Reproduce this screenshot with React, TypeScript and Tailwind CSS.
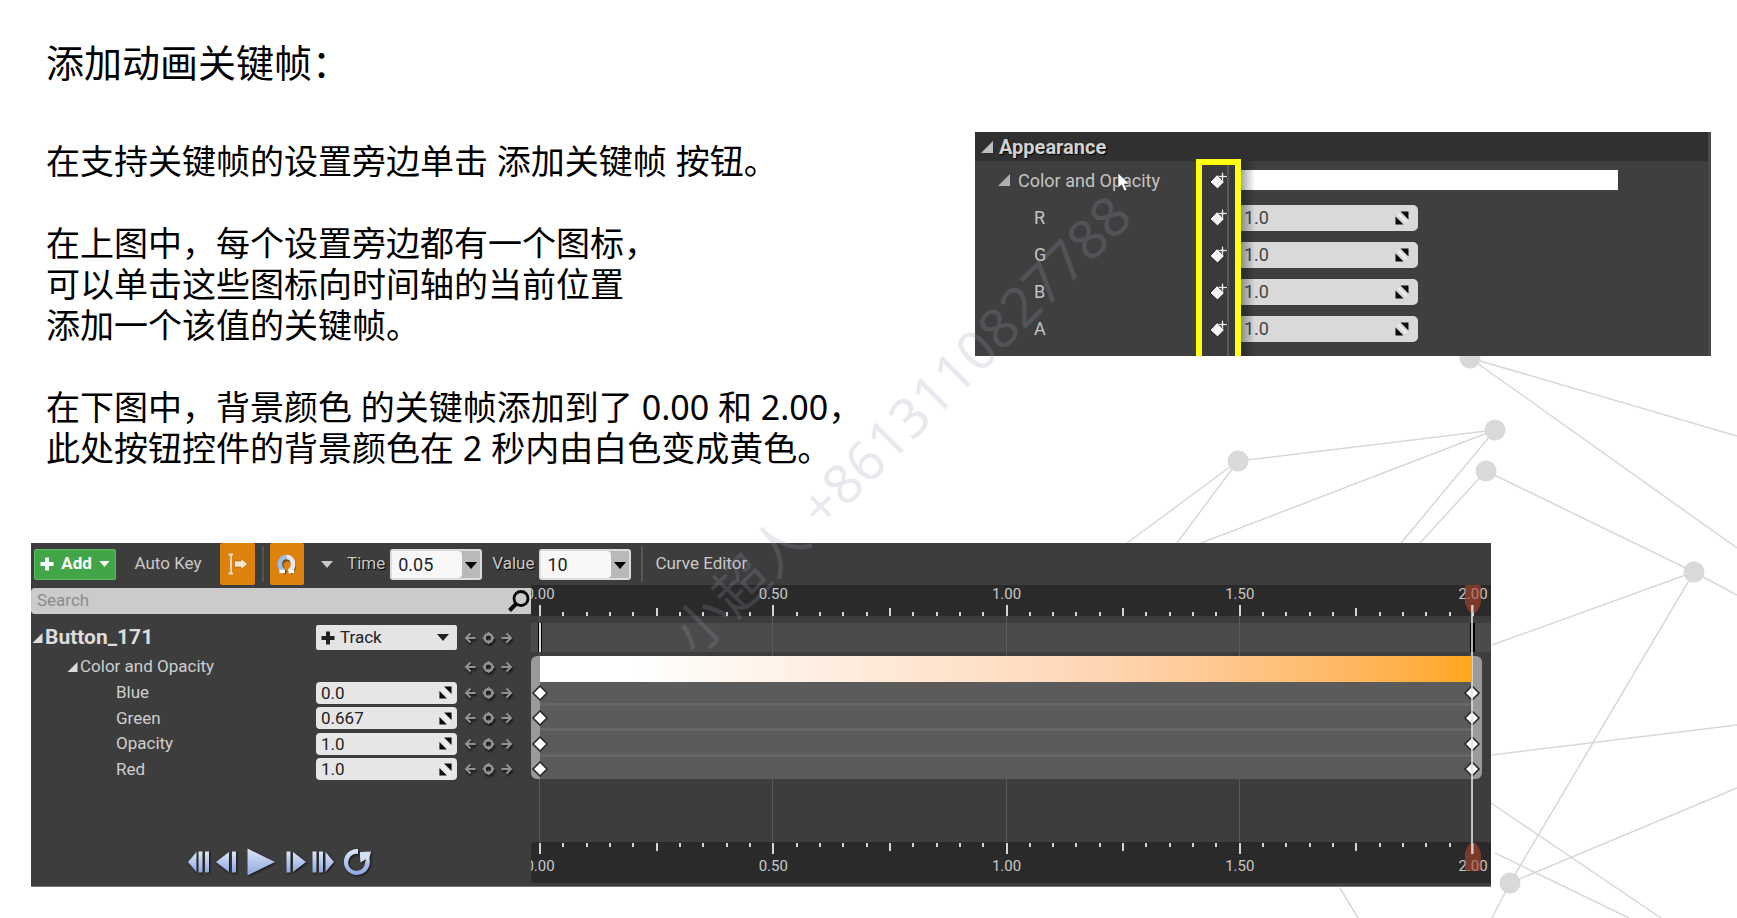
import React from 'react';

const NODES: [number, number][] = [
  [1470, 358], [1495, 430], [1238, 461], [1486, 471], [1694, 572], [1510, 883],
];

const EDGES: [number, number, number, number][] = [
  [1470, 358, 1737, 436], [1470, 358, 1737, 548], [1238, 461, 1495, 430],
  [1495, 430, 1201, 543], [1495, 430, 1401, 543], [1486, 471, 1420, 543],
  [1238, 461, 1127, 543], [1238, 461, 1177, 543], [1486, 471, 1694, 572],
  [1694, 572, 1737, 595], [1694, 572, 1492, 645], [1694, 572, 1510, 883],
  [1492, 755, 1737, 725], [1510, 883, 1737, 788], [1510, 883, 1492, 918],
  [1491, 803, 1661, 918], [1495, 853, 1629, 918], [1340, 888, 1358, 918],
];

function Network() {
  return (
    <svg className="absolute right-0 top-0 -z-10" width="1737" height="918" viewBox="0 0 1737 918" aria-hidden="true">
      <g stroke="#d8d8d8" strokeWidth="1.5">
        {EDGES.map(([a, b, c, d], i) => <line key={i} x1={a} y1={b} x2={c} y2={d} />)}
      </g>
      <g fill="#d9d9d9">
        {NODES.map(([x, y], i) => <circle key={i} cx={x} cy={y} r="10.5" />)}
      </g>
    </svg>
  );
}

function Expander({ className = '' }: { className?: string }) {
  return (
    <svg className={className} width="12" height="12" viewBox="0 0 12 12" aria-hidden="true">
      <path d="M12 0v12H0z" fill="currentColor" />
    </svg>
  );
}

function SpinIcon({ className = '' }: { className?: string }) {
  return (
    <svg className={className} width="14" height="14" viewBox="0 0 14 14" fill="#0a0a0a" aria-hidden="true">
      <path d="M5.500 0.500H13.500V8.500z" />
      <path d="M0.500 5.500V13.500H8.500z" />
      <path d="M3 2.500L11.500 11" stroke="#f6f6f6" strokeWidth="1.500" />
    </svg>
  );
}

function Caret({ className = '' }: { className?: string }) {
  return (
    <svg className={className} width="12" height="7" viewBox="0 0 12 7" fill="currentColor" aria-hidden="true">
      <path d="M0 0h12L6 7z" />
    </svg>
  );
}

function Plus() {
  return (
    <svg width="14" height="14" viewBox="0 0 14 14" fill="currentColor" aria-hidden="true">
      <path d="M5 0.500h4V5h4.500v4H9v4.500H5V9H0.500V5H5z" />
    </svg>
  );
}

function AddKeyIcon() {
  return (
    <svg width="18" height="18" viewBox="0 0 18 18" aria-hidden="true">
      <path d="M7 2.500L14.500 10L7.500 17L0 10z" fill="#f4f4f4" stroke="#1b1b1b" />
      <path d="M12.500 0v8M9 4.500h8.500" stroke="#1b1b1b" strokeWidth="3" />
      <path d="M12.500 0.500v8M8.500 4.500h8.500" stroke="#e8e8e8" strokeWidth="1.600" />
    </svg>
  );
}

function KeyNav() {
  return (
    <div className="flex items-center gap-[5px] text-[#929292] drop-shadow-[1px_2px_1px_#111]">
      <button aria-label="Previous key">
        <svg width="13" height="12" viewBox="0 0 13 12" fill="none" stroke="currentColor" strokeWidth="2"><path d="M11.500 6H2.500M6.500 1.500L2 6L6.500 10.500" /></svg>
      </button>
      <button aria-label="Add key">
        <svg width="13" height="12" viewBox="0 0 13 12" fill="none" stroke="currentColor"><circle cx="6.500" cy="6" r="3.900" strokeWidth="2.600" /><path d="M6.500 0v3.500M6.500 8.500v3.500M0.500 6h3.500M9 6h3.500" strokeWidth="1.500" /></svg>
      </button>
      <button aria-label="Next key">
        <svg width="13" height="12" viewBox="0 0 13 12" fill="none" stroke="currentColor" strokeWidth="2"><path d="M1.500 6h9M6.500 1.500L11 6L6.500 10.500" /></svg>
      </button>
    </div>
  );
}

function Appearance() {
  return (
    <section className="relative mr-[26px] mt-[132px] h-[224px] w-[736px] shrink-0 overflow-hidden border-r-[3px] border-[#4a4a4a] bg-[#3f3f3f] text-[#c4c4c4]">
      <h2 className="flex h-[29px] items-center gap-[6px] bg-[#303030] pl-[6px] text-[20px] font-bold text-[#d2d2d2] [text-shadow:1px_1px_1px_#000]">
        <Expander className="text-[#bdbdbd]" />
        Appearance
      </h2>
      <div className="flex h-[38px] items-center">
        <div className="flex w-[266px] items-center gap-2 pl-[23px] text-[18px]">
          <Expander className="text-[#b0b0b0]" />
          Color and Opacity
        </div>
        <div className="mr-[90px] h-5 grow bg-white" />
      </div>
      {['R', 'G', 'B', 'A'].map((c) => (
        <div key={c} className="flex h-[37px] items-center text-[18px]">
          <label htmlFor={`ch-${c}`} className="w-[266px] pl-[59px]">{c}</label>
          <div className="flex h-[26px] w-[177px] items-center rounded-r-[5px] bg-[#d9d9d9] pr-[9px]">
            <input id={`ch-${c}`} defaultValue="1.0" className="w-0 grow bg-transparent pl-[3px] text-[18px] text-[#444] outline-none" />
            <SpinIcon />
          </div>
        </div>
      ))}
      <div className="absolute bottom-0 left-[221px] top-[27px] flex w-[45px] flex-col border-6 border-b-0 border-[#ffff12] bg-[#3a3a3a] pt-[7px]">
        <div className="absolute inset-y-0 right-[6px] w-[2px] bg-[#55585e]" />
        {['color', 'R', 'G', 'B', 'A'].map((c) => (
          <button key={c} aria-label={`Add keyframe ${c}`} className="relative flex h-[37px] shrink-0 items-start pl-[8px]"><AddKeyIcon /></button>
        ))}
      </div>
      <div className="absolute bottom-0 left-[266px] top-[29px] w-[14px] bg-linear-to-r from-black/35 to-transparent" />
      <svg className="absolute left-[142px] top-[40px]" width="14" height="20" viewBox="0 0 14 20" aria-hidden="true">
        <path d="M1 1V16L4.500 12.800L7.500 19L10 17.800L7.200 12H12.500z" fill="#fff" stroke="#333" strokeWidth="0.600" />
      </svg>
    </section>
  );
}

function Combo({ label, value }: { label: string; value: string }) {
  return (
    <label className="flex items-center gap-[5px]">
      {label}
      <span className="flex h-[31px] w-[92px] rounded-[3px] border-2 border-[#dcdcdc] bg-[#b9b9b9] relative">
        <select defaultValue={value} className="mr-[18px] w-0 grow appearance-none rounded-r-[4px] bg-[#f7f7f7] pl-[6px] text-[18px] text-[#222] outline-none">
          <option>{value}</option>
        </select>
        <Caret className="pointer-events-none absolute right-[3px] top-[11px] text-black" />
      </span>
    </label>
  );
}

function Toolbar() {
  return (
    <div className="flex h-[42px] items-center pl-[3px] text-[17px] text-[#c9c9c9] [text-shadow:1px_1px_1px_#000]">
      <button className="flex h-[31px] w-[82px] items-center justify-center gap-[7px] rounded-[2px] border border-[#5cc063] bg-[#42a649] font-bold text-white">
        <Plus />Add<Caret className="h-[6px] w-[11px]" />
      </button>
      <button className="w-[104px] text-center">Auto Key</button>
      <button aria-label="Key all" className="flex h-[42px] w-[35px] items-center justify-center rounded-[2px] bg-[#dd820c]">
        <svg width="20" height="22" viewBox="0 0 20 22" aria-hidden="true">
          <path d="M0.500 1.500h4.500M0.500 20.500h4.500M3 1.500v19" stroke="#f0dcc0" strokeWidth="1.800" fill="none" />
          <path d="M6.500 8h6.500V5.500l6.500 5.500L13 16.500v-2.500H6.500z" fill="#f7e6cb" stroke="#8a5208" strokeWidth="0.500" />
        </svg>
      </button>
      <div className="ml-[7px] mr-[6px] h-[36px] w-[2px] bg-[#57534b]" />
      <button aria-label="Snap" className="flex h-[42px] w-[34px] items-center justify-center rounded-[2px] bg-[#dd820c]">
        <svg width="20" height="21" viewBox="0 0 20 21" fill="none" aria-hidden="true">
          <path d="M8 17.500C1.500 14 1.500 3.500 9.500 3.500S17 14 12 17.500" stroke="#6c4a1c" strokeWidth="4.500" transform="translate(1 1.500)" />
          <path d="M7 17.500C1 14 1.500 3 9.500 3" stroke="#9dbcf0" strokeWidth="4.600" />
          <path d="M9.500 3C17.500 3 18 14 12 17.500" stroke="#e3e8f2" strokeWidth="4.600" />
          <path d="M2.500 17.500h5.500M11.500 17.500h5.500" stroke="#fff" strokeWidth="3.500" />
        </svg>
      </button>
      <button aria-label="Snap options" className="ml-[17px] mr-[14px]"><Caret /></button>
      <Combo label="Time" value="0.05" />
      <div className="w-[10px]" />
      <Combo label="Value" value="10" />
      <div className="ml-[10px] h-[36px] w-[2px] bg-[#57575a]" />
      <button className="ml-[12px]">Curve Editor</button>
    </div>
  );
}

function ChannelRow({ name, value }: { name: string; value: string }) {
  return (
    <div className="flex flex-1 items-center pl-[85px]">
      <label htmlFor={`v-${name}`} className="w-[200px]">{name}</label>
      <div className="mr-[7px] flex h-[22px] w-[141px] items-center rounded-[4px] bg-[#e6e6e6] pr-[5px]">
        <input id={`v-${name}`} defaultValue={value} className="w-0 grow bg-transparent pl-[5px] text-[17px] leading-[22px] text-[#222] outline-none" />
        <SpinIcon className="h-[13px] w-[13px]" />
      </div>
      <KeyNav />
    </div>
  );
}

const PLAY_PATHS: { label: string; w: number; h: number; d: string }[] = [
  { label: 'To start', w: 22, h: 22, d: 'M8.500 1v20L0 11zM10.500 0.500h4v21h-4zM17 0.500h4v21h-4z' },
  { label: 'Step back', w: 21, h: 22, d: 'M13 1v20L0 11zM16 0.500h4v21h-4z' },
  { label: 'Play', w: 29, h: 28, d: 'M0.500 0.500L28 14L0.500 27.500z' },
  { label: 'Step forward', w: 20, h: 22, d: 'M0.500 0.500h4v21h-4zM7 1L20 11L7 21z' },
  { label: 'To end', w: 22, h: 22, d: 'M0.500 0.500h4v21h-4zM7 0.500h4v21h-4zM13.500 1L22 11L13.500 21z' },
];

function Playback() {
  return (
    <div className="flex h-[30px] items-center pl-[157px]">
      <svg width="0" height="0" aria-hidden="true">
        <linearGradient id="steel" x1="0" y1="0" x2="0" y2="1">
          <stop offset="0" stopColor="#dfe7f6" /><stop offset="1" stopColor="#8ba6e0" />
        </linearGradient>
      </svg>
      <div className="flex items-center gap-[6px] drop-shadow-[1px_1px_1px_#111]">
        {PLAY_PATHS.map((p) => (
          <button key={p.label} aria-label={p.label} className={p.label === 'Play' ? 'mx-[4px]' : ''}>
            <svg width={p.w} height={p.h} viewBox={`0 0 ${p.w} ${p.h}`}><path d={p.d} fill="url(#steel)" /></svg>
          </button>
        ))}
        <button aria-label="Loop" className="ml-[2px]">
          <svg width="30" height="30" viewBox="0 0 30 30">
            <path d="M16 2A13 13 0 1 0 27.500 12L23 14A8.500 8.500 0 1 1 16 7z" fill="url(#steel)" />
            <path d="M18 5L29 4.500L26.500 15L23.500 12.500L18.500 15.500L18 9.500z" fill="#d3def5" />
          </svg>
        </button>
      </div>
    </div>
  );
}

const TICKS = Array.from({ length: 41 }, (_, i) => i);
const LABELS = ['0.00', '0.50', '1.00', '1.50', '2.00'];

function Ruler({ top }: { top: boolean }) {
  return (
    <div className={top ? 'relative h-[31px] overflow-hidden bg-[#2a2a2a]' : 'relative h-[41px] overflow-hidden rounded-l-[3px] bg-[#2a2a2a]'}>
      <div className="absolute inset-y-0 left-[8px] right-[19px]">
        {TICKS.map((i) => (
          <span
            key={i}
            className={`absolute w-[2px] bg-[#d4d4d4] ${top ? 'bottom-0' : 'top-[1px]'} ${i % 10 === 0 ? 'h-[11px]' : i % 5 === 0 ? 'h-[8px]' : 'h-[4px]'}`}
            style={{ left: `${i * 2.5}%` }}
          />
        ))}
        {LABELS.map((l, i) => (
          <span
            key={l}
            className={`absolute -translate-x-1/2 pl-[2px] text-[15px] leading-[18px] text-[#c9c9c9] ${top ? 'top-0' : 'top-[15px]'}`}
            style={{ left: `${i * 25}%` }}
          >
            {l}
          </span>
        ))}
        <svg className={top ? 'absolute -right-[10px] top-0' : 'absolute -right-[10px] top-0 rotate-180'} width="18" height="29" viewBox="0 0 18 29" aria-hidden="true">
          <path d="M1 2Q1 0 3 0H15Q17 0 17 2V18Q15 25 11 28H7Q3 25 1 18z" fill="#b0482f" fillOpacity="0.6" />
        </svg>
      </div>
    </div>
  );
}

const CHANNELS = [['Blue', '0.0'], ['Green', '0.667'], ['Opacity', '1.0'], ['Red', '1.0']];

function Diamond() {
  return (
    <svg className="relative" width="16" height="16" viewBox="0 0 16 16" aria-hidden="true">
      <path d="M8 1L15 8L8 15L1 8z" fill="#fff" stroke="#2c2c2c" strokeWidth="1.600" />
    </svg>
  );
}

function Timeline() {
  return (
    <div className="relative flex grow flex-col pb-[3px]">
      <Ruler top />
      <div className="relative flex grow flex-col pt-[7px]">
        <div className="h-[29px] bg-[#4b4b4b]" />
        <div className="absolute inset-y-0 left-[8px] right-[19px]">
          {[0, 1, 2, 3, 4].map((i) => (
            <span key={i} className="absolute inset-y-0 w-px bg-[#5a5a5a]" style={{ left: `${i * 25}%` }} />
          ))}
          <span className="absolute -left-[1px] top-[7px] h-[29px] w-[4px] border-x-[1px] border-black bg-[#ddd]" />
          <span className="absolute -right-[3px] top-[7px] h-[29px] w-[5px] bg-black" />
        </div>
        <div className="relative mr-[9px] mt-[4px] flex h-[123px] flex-col overflow-hidden rounded-[6px] bg-[#9a9a9a]">
          <div className="absolute inset-y-0 left-[9px] right-[10px] bg-[#5b5b5b]" />
          <div className="relative z-10 -mb-[2px] ml-[9px] mr-[10px] h-[26px] shrink-0 bg-linear-to-r from-white from-10% via-[#ffd6b5] via-60% to-[#ffa716]" />
          <div className="relative flex h-[102px] shrink-0 flex-col">
            {CHANNELS.map(([n]) => (
              <div key={n} className="relative flex flex-1 items-center justify-between pl-[1px] pr-[2px]">
                <span className="absolute bottom-0 left-[9px] right-[10px] h-[3px] bg-[#666]" />
                <Diamond />
                <Diamond />
              </div>
            ))}
          </div>
        </div>
      </div>
      <Ruler top={false} />
      <span className="pointer-events-none absolute bottom-[32px] right-[18px] top-[20px] w-[2px] bg-[#e0e0e0]/80" />
    </div>
  );
}

function Sequencer() {
  return (
    <section className="ml-[31px] mr-[246px] mt-[74px] h-[344px] border-b border-[#777] bg-[#3d3d3d] text-[#cfcfcf]">
      <Toolbar />
      <div className="flex h-[301px]">
        <div className="flex w-[500px] shrink-0 flex-col pt-[3px] text-[17px]">
          <div className="flex h-[26px] items-center rounded-l-[4px] bg-[#cbcbcb] pl-[6px] pr-[1px]">
            <input aria-label="Search" placeholder="Search" className="w-0 grow bg-transparent outline-none placeholder:text-[#8c8c8c]" />
            <svg width="22" height="22" viewBox="0 0 22 22" fill="none" stroke="#080808" aria-hidden="true">
              <circle cx="13" cy="8.500" r="7" strokeWidth="2.800" />
              <path d="M8 14L1.500 20.500" strokeWidth="4" />
            </svg>
          </div>
          <div className="mt-[9px] flex h-[29px] items-center pl-[1px]">
            <div className="flex w-[284px] items-center gap-[2px] text-[21px] font-bold text-[#dcdcdc]">
              <Expander className="h-[10px] w-[11px]" />
              Button_171
            </div>
            <button className="mr-[7px] flex h-[25px] w-[141px] items-center gap-[5px] rounded-[2px] bg-[#e4e4e4] px-[5px] text-[#222]">
              <Plus />Track<Caret className="ml-auto mr-[3px]" />
            </button>
            <KeyNav />
          </div>
          <div className="mt-[2px] flex h-[26px] items-center pl-[36px]">
            <div className="flex w-[397px] items-center gap-[2px]">
              <Expander className="h-[10px] w-[11px] text-[#dcdcdc]" />
              Color and Opacity
            </div>
            <KeyNav />
          </div>
          <div className="flex h-[102px] flex-col">
            {CHANNELS.map(([n, v]) => <ChannelRow key={n} name={n} value={v} />)}
          </div>
          <div className="mt-auto pb-[9px]"><Playback /></div>
        </div>
        <Timeline />
      </div>
    </section>
  );
}

export default function App() {
  return (
    <main className="relative isolate min-h-screen overflow-hidden bg-white font-[Roboto,sans-serif]">
      <Network />
      <div className="flex items-start justify-between">
        <article className="flex flex-col gap-[41px] whitespace-nowrap pl-[46px] pt-[42px] font-['Noto_Sans','Noto_Sans_CJK_SC',sans-serif] text-[34px] leading-[41px] text-black">
          <h1 className="mb-[17px] text-[38px]">添加动画关键帧：</h1>
          <p>在支持关键帧的设置旁边单击 添加关键帧 按钮。</p>
          <p>在上图中，每个设置旁边都有一个图标，<br />可以单击这些图标向时间轴的当前位置<br />添加一个该值的关键帧。</p>
          <p>在下图中，背景颜色 的关键帧添加到了 0.00 和 2.00，<br />此处按钮控件的背景颜色在 2 秒内由白色变成黄色。</p>
        </article>
        <Appearance />
      </div>
      <Sequencer />
      <div className="pointer-events-none absolute left-[901px] top-[424px] -translate-x-1/2 -translate-y-1/2 -rotate-45 whitespace-nowrap font-['Noto_Sans','Noto_Sans_CJK_SC',sans-serif] text-[55px] text-[#959cb4]/22">
        小超人 +8613110827788
      </div>
    </main>
  );
}
